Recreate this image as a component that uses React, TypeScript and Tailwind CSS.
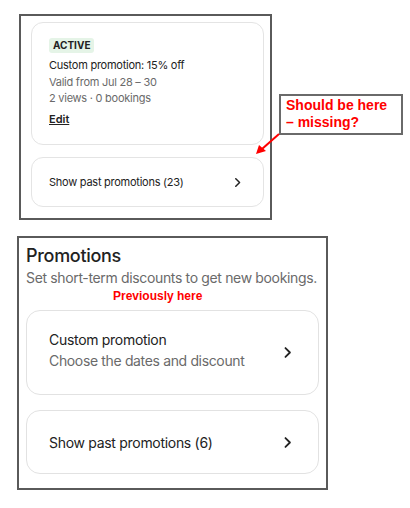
import React from 'react'

const font = { fontFamily: 'Inter, "Noto Sans", sans-serif' }

function Chevron({ size = 14 }: { size?: number }) {
  return (
    <svg width={size} height={size} viewBox="0 0 16 16" fill="none">
      <path d="M5.5 2.5 11 8l-5.5 5.5" stroke="#222" strokeWidth="2.2" strokeLinecap="round" strokeLinejoin="round" />
    </svg>
  )
}

export default function App() {
  return (
    <div className="relative w-[410px] h-[508px] bg-white text-[#222]" style={font}>
      {/* top snapshot */}
      <div className="flex items-start pt-[14px] pl-[19px]">
        <div className="w-[253px] h-[206px] border-2 border-[#5a5a5a] pt-[6px] pl-[10px] pr-[6px] flex flex-col gap-[12px]">
          <div className="h-[123px] rounded-[12px] border border-[#e4e4e4] pl-[17px] pt-[15px]">
            <div className="w-fit bg-[#e5f4e7] rounded-[3px] px-[4px] py-[1px] text-[10px] font-bold leading-[13px]">ACTIVE</div>
            <div className="mt-[4px] text-[11px] leading-[16.5px] tracking-[-0.25px]">Custom promotion: 15% off</div>
            <div className="text-[11px] leading-[16.5px] tracking-[-0.25px] text-[#6a6a6a]">Valid from Jul 28 – 30</div>
            <div className="text-[11px] leading-[16.5px] tracking-[-0.25px] text-[#6a6a6a]">2 views · 0 bookings</div>
            <div className="mt-[4px] text-[11px] leading-[16px] font-semibold underline">Edit</div>
          </div>
          <div className="h-[50px] rounded-[12px] border border-[#e4e4e4] pl-[17px] pr-[20px] flex items-center justify-between">
            <span className="text-[11px] tracking-[-0.25px]">Show past promotions (23)</span>
            <Chevron size={11} />
          </div>
        </div>
        <div className="ml-[7px] mt-[80px] w-[124px] h-[41px] border-2 border-[#6a6a6a] pl-[5px] pt-[1px] text-[#ff0000] font-bold text-[14px] leading-[17px]" style={{ fontFamily: '"Liberation Sans", Arial, sans-serif' }}>
          <div>Should be here</div>
          <div>– missing?</div>
        </div>
      </div>

      <svg className="absolute left-0 top-0" width="410" height="508">
        <line x1="279" y1="134" x2="262" y2="149" stroke="#ff0000" strokeWidth="2" />
        <polygon points="256,154 259,145 266,151" fill="#ff0000" />
      </svg>

      {/* bottom snapshot */}
      <div className="ml-[17px] mt-[16px] w-[311px] h-[254px] border-2 border-[#5a5a5a] pl-[7px] pr-[7px] pt-[6px]">
        <div className="text-[18px] leading-[24px] font-medium tracking-[-0.3px]">Promotions</div>
        <div className="text-[14px] leading-[18px] text-[#6a6a6a] tracking-[-0.35px] mt-[1px]">Set short-term discounts to get new bookings.</div>
        <div className="ml-[87px] mt-[2px] text-[12px] leading-[14px] font-bold text-[#ff0000]" style={{ fontFamily: '"Liberation Sans", Arial, sans-serif' }}>Previously here</div>
        <div className="mt-[7px] h-[85px] rounded-[14px] border border-[#e2e2e2] pl-[22px] pr-[24px] flex items-center justify-between">
          <div className="pb-[5px]">
            <div className="text-[14px] leading-[21px] tracking-[-0.3px]">Custom promotion</div>
            <div className="text-[14px] leading-[21px] tracking-[-0.35px] text-[#6a6a6a]">Choose the dates and discount</div>
          </div>
          <Chevron size={13} />
        </div>
        <div className="mt-[15px] h-[64px] rounded-[14px] border border-[#e2e2e2] pl-[22px] pr-[24px] flex items-center justify-between">
          <span className="text-[14px] tracking-[-0.3px]">Show past promotions (6)</span>
          <Chevron size={13} />
        </div>
      </div>
    </div>
  )
}
